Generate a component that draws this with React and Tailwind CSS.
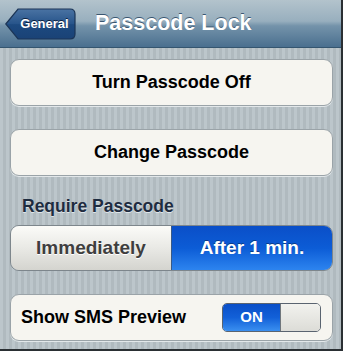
import { useState } from "react";

function BackButton() {
  return (
    <button className="relative h-[32px] w-[71px] flex items-center justify-center pl-[12px] pr-[4px]">
      <svg className="absolute inset-0" width="71" height="32" viewBox="0 0 71 32">
        <defs>
          <linearGradient id="back" x1="0" y1="0" x2="0" y2="1">
            <stop offset="0" stopColor="#4a73a3" />
            <stop offset="0.5" stopColor="#27548a" />
            <stop offset="0.52" stopColor="#1d4a80" />
            <stop offset="1" stopColor="#1a4276" />
          </linearGradient>
        </defs>
        <path
          d="M0.8 16 L13 1 H65 Q70 1 70 6 V26 Q70 31 65 31 H13 Z"
          fill="url(#back)"
          stroke="#1c3556"
          strokeWidth="1.2"
        />
      </svg>
      <span className="relative text-[13px] font-bold text-white [text-shadow:0_-1px_0_#0d2240]">General</span>
    </button>
  );
}

function Row({ children, className = "" }) {
  return (
    <div
      className={
        "h-[47px] rounded-[9px] border border-[#9aa3a8] bg-[#f6f5f0] shadow-[0_1px_0_#e3e8ea] flex items-center " +
        className
      }
    >
      {children}
    </div>
  );
}

export default function App() {
  const [after, setAfter] = useState(true);
  const [sms, setSms] = useState(true);

  return (
    <div className="w-[346px] h-[353px] bg-white font-['Liberation_Sans',Arial,sans-serif]">
      <div className="w-[343px] h-[351px] border-r-2 border-b-2 border-[#2a2f33] flex flex-col overflow-hidden">
        <header className="h-[48px] shrink-0 flex items-center pl-[5px] border-b border-[#34556f] bg-[linear-gradient(180deg,#b3c3cc_0%,#98afbe_45%,#7493aa_55%,#4a6f8f_100%)]">
          <BackButton />
          <h1 className="ml-[19px] text-[21.5px] font-bold text-white [text-shadow:0_-1px_0_#3a5670]">Passcode Lock</h1>
        </header>

        <main className="flex-1 pt-[11px] pl-[10px] pr-[8px] bg-[repeating-linear-gradient(90deg,#bcc6cb_0px,#bcc6cb_3px,#b0babf_3px,#b0babf_6px)]">
          <Row className="justify-center">
            <span className="text-[18px] font-bold text-black">Turn Passcode Off</span>
          </Row>
          <Row className="justify-center mt-[23px]">
            <span className="text-[18px] font-bold text-black">Change Passcode</span>
          </Row>

          <div className="mt-[20px] pl-[12px] text-[17.5px] leading-[20px] font-bold text-[#1e2c40] [text-shadow:0_1px_0_#dfe6ea]">
            Require Passcode
          </div>

          <div className="mt-[9px] h-[46px] flex rounded-[9px] border border-[#7d868c] overflow-hidden">
            <button
              onClick={() => setAfter(false)}
              className={
                "flex-1 text-[19px] font-bold " +
                (after
                  ? "text-[#3e3e3e] bg-[linear-gradient(180deg,#fbfbf8_0%,#e9e9e5_50%,#d4d4cf_100%)] [text-shadow:0_1px_0_#fff]"
                  : "text-white bg-[linear-gradient(180deg,#3f8ef0_0%,#0d5fd6_50%,#0a4fc0_100%)]")
              }
            >
              Immediately
            </button>
            <button
              onClick={() => setAfter(true)}
              className={
                "flex-1 text-[19px] font-bold border-l border-[#3a5a86] " +
                (after
                  ? "text-white bg-[linear-gradient(180deg,#0a4fc8_0%,#0c5cd6_50%,#2d84ef_100%)] [text-shadow:0_-1px_0_#0a3b8a]"
                  : "text-[#3e3e3e] bg-[linear-gradient(180deg,#fbfbf8_0%,#e9e9e5_50%,#d4d4cf_100%)]")
              }
            >
              After 1 min.
            </button>
          </div>

          <Row className="mt-[23px] pl-[10px] pr-[11px] justify-between">
            <span className="text-[18px] font-bold text-black">Show SMS Preview</span>
            <button
              onClick={() => setSms(!sms)}
              className="h-[29px] w-[99px] flex rounded-[5px] border border-[#5a6470] overflow-hidden"
            >
              {sms ? (
                <>
                  <span className="w-[57px] flex items-center justify-center text-[15px] font-bold text-white bg-[linear-gradient(180deg,#0a4fc8_0%,#1260d8_50%,#3a8ff0_100%)]">
                    ON
                  </span>
                  <span className="flex-1 border-l border-[#6f767c] bg-[linear-gradient(180deg,#f2f2ee_0%,#dcdcd7_100%)]" />
                </>
              ) : (
                <>
                  <span className="w-[42px] border-r border-[#6f767c] bg-[linear-gradient(180deg,#f2f2ee_0%,#dcdcd7_100%)]" />
                  <span className="flex-1 flex items-center justify-center text-[15px] font-bold text-[#7a7a7a] bg-[#eeeeea]">
                    OFF
                  </span>
                </>
              )}
            </button>
          </Row>
        </main>
      </div>
    </div>
  );
}
